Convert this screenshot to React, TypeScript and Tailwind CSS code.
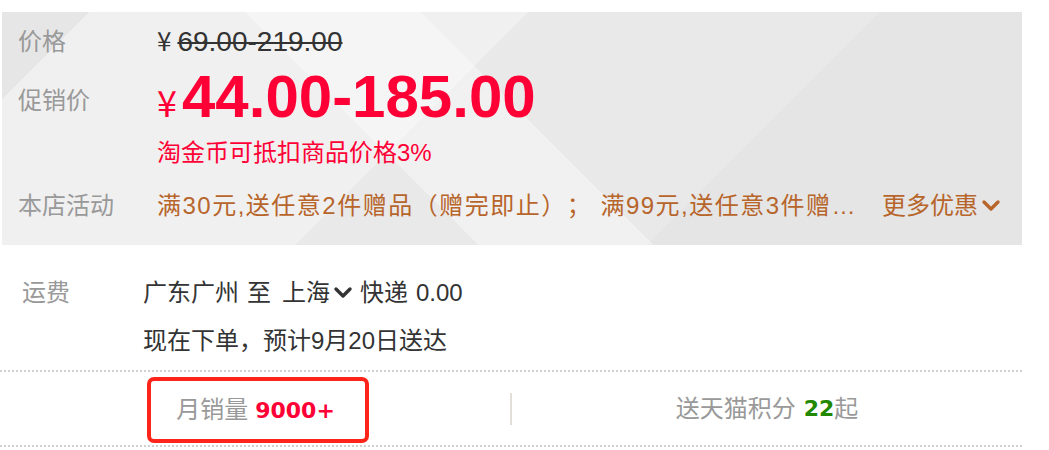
import React from 'react';

const Chevron: React.FC<{ className?: string; color: string }> = ({ className, color }) => (
    <svg className={className} viewBox="0 0 20 14" fill="none">
        <polyline points="3,3 10,10 17,3" stroke={color} strokeWidth="3.4" strokeLinecap="round" strokeLinejoin="round" />
    </svg>
);

const App: React.FC = () => {
    return (
        <div className="w-[1049px] h-[450px] bg-white font-['Liberation_Sans','Noto_Sans_CJK_SC',sans-serif] text-[24px] overflow-hidden [text-spacing-trim:space-all]">
            <div className="w-[1022px]">
                {/* price panel */}
                <div className="ml-[2px] mt-[12px] pt-[12px] h-[233px] w-[1020px] bg-[#ebebeb] bg-[linear-gradient(45deg,transparent_0_38%,rgba(255,255,255,0.35)_38%_52%,transparent_52%_100%),linear-gradient(135deg,#e6e6e6_0_7%,#f0f0f0_7%_42%,#e9e9e9_42%_70%,#e5e5e5_70%_100%)]">
                    <div className="flex h-[36px] leading-[36px]">
                        <div className="w-[155px] pl-[16px] text-[#999]">价格</div>
                        <div className="flex items-baseline text-[#333]">
                            <span className="text-[26px] leading-none mr-[6px] font-['Noto_Sans_CJK_SC',sans-serif]">¥</span>
                            <span className="text-[28px] line-through decoration-2">69.00-219.00</span>
                        </div>
                    </div>
                    <div className="flex h-[77px]">
                        <div className="w-[155px] pl-[16px] mt-[23px] h-[36px] leading-[36px] text-[#999]">促销价</div>
                        <div className="mt-[5px] h-[64px] leading-[64px] flex items-baseline text-[#ff0036]">
                            <span className="text-[36px] leading-none mr-[5px] font-['Noto_Sans_CJK_SC',sans-serif]">¥</span>
                            <span className="text-[60px] font-bold">44.00-185.00</span>
                        </div>
                    </div>
                    <div className="flex h-[32px] leading-[32px]">
                        <div className="w-[155px]" />
                        <div className="text-[#ff0036]">淘金币可抵扣商品价格3%</div>
                    </div>
                    <div className="flex items-center mt-[19px] h-[36px] leading-[36px]">
                        <div className="w-[155px] pl-[16px] text-[#999]">本店活动</div>
                        <div className="w-[705px] whitespace-nowrap overflow-hidden tracking-[1.5px] text-[#b7652b]">
                            满30元,送任意2件赠品（赠完即止）； 满99元,送任意3件赠…
                        </div>
                        <div className="ml-[20px] flex items-center text-[#b7652b]">
                            更多优惠
                            <Chevron className="w-[20px] h-[14px] ml-[3px]" color="#b7652b" />
                        </div>
                    </div>
                </div>

                {/* shipping */}
                <div className="flex mt-[30px] mb-[11px]">
                    <div className="w-[143px] pl-[22px] leading-[36px] text-[#999]">运费</div>
                    <div className="text-[#333]">
                        <div className="flex items-center h-[36px] leading-[36px]">
                            <span>广东广州</span>
                            <span className="ml-[8px]">至</span>
                            <span className="ml-[11px]">上海</span>
                            <Chevron className="w-[20px] h-[14px] ml-[3px]" color="#333" />
                            <span className="ml-[7px]">快递</span>
                            <span className="ml-[8px]">0.00</span>
                        </div>
                        <div className="mt-[12px] h-[36px] leading-[36px]">现在下单，预计9月20日送达</div>
                    </div>
                </div>

                {/* sales / points */}
                <div className="flex h-[77px] border-t-2 border-b-2 border-dotted border-[#d0d0d0]">
                    <div className="flex-1 flex justify-center items-end pb-[2px]">
                        <div className="ml-[6px] flex items-center h-[66px] border-4 border-[#ff2419] rounded-[7px] pl-[25px] pr-[30px] text-[#999]">
                            月销量
                            <span className="ml-[7px] text-[22px] font-bold text-[#ff0036] font-['DejaVu_Sans',sans-serif]">9000+</span>
                        </div>
                    </div>
                    <div className="self-center w-[2px] h-[32px] bg-[#e2ded8]" />
                    <div className="flex-1 flex justify-center items-center text-[#999]">
                        送天猫积分
                        <span className="ml-[8px] text-[22px] font-bold text-[#228800] font-['DejaVu_Sans',sans-serif]">22</span>
                        起
                    </div>
                </div>
            </div>
        </div>
    );
};

export default App;
